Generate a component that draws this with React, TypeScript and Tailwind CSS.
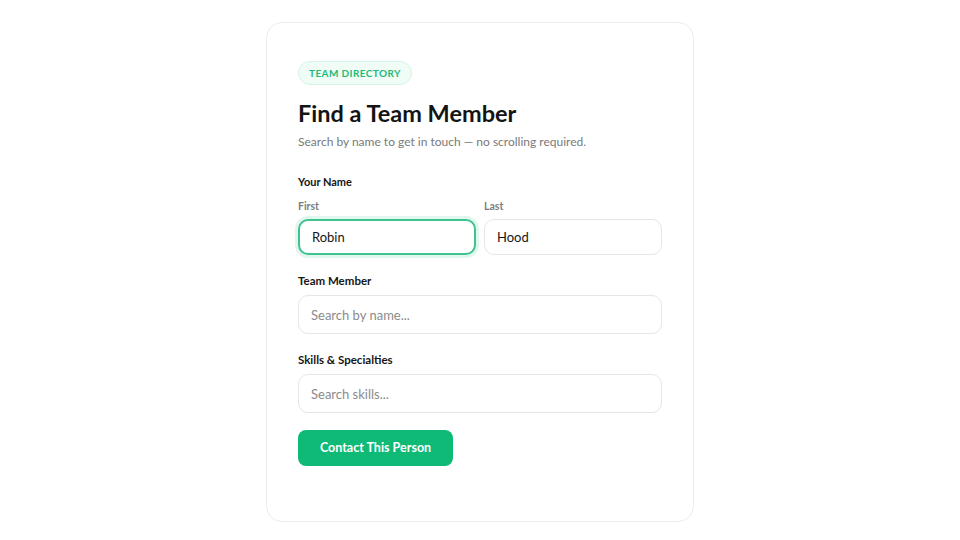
import { useState } from 'react';

const font = { fontFamily: 'Lato, "Noto Sans", sans-serif' };

function TextField({
  value,
  placeholder,
  focused,
  tall,
  onChange,
}: {
  value: string;
  placeholder?: string;
  focused?: boolean;
  tall?: boolean;
  onChange: (v: string) => void;
}) {
  return (
    <input
      value={value}
      placeholder={placeholder}
      onChange={(e) => onChange(e.target.value)}
      className={`w-full rounded-[10px] bg-white px-[12px] text-[13px] text-[#161616] placeholder:text-[#8b8b8b] focus:outline-none ${
        tall ? 'h-[39px]' : 'h-[36px]'
      } ${
        focused
          ? 'border-2 border-[#3cc48c] px-[11px] shadow-[0_0_0_3px_rgba(16,185,129,0.12)]'
          : 'border-[1.5px] border-[#e6e6e6]'
      }`}
    />
  );
}

export default function App() {
  const [first, setFirst] = useState('Robin');
  const [last, setLast] = useState('Hood');
  const [member, setMember] = useState('');
  const [skills, setSkills] = useState('');

  return (
    <div className="flex min-h-[540px] w-full justify-center bg-white pt-[22px]" style={font}>
      <div className="h-fit w-[428px] rounded-[16px] border border-[#ececec] bg-white px-[31px] pb-[55px] pt-[38px]">
        <div className="flex">
          <span className="flex h-6 items-center rounded-full border border-[#d3f5e5] bg-[#f0fcf6] px-[10px] text-[10px] font-bold tracking-[0.04em] text-[#1fb97a]">
            TEAM DIRECTORY
          </span>
        </div>

        <h1 className="mt-[13px] text-[23.5px] font-bold leading-[30px] text-[#141414]">
          Find a Team Member
        </h1>
        <p className="mt-[4px] text-[12px] leading-5 text-[#7a7a7a]">
          Search by name to get in touch — no scrolling required.
        </p>

        <div className="mt-[22px]">
          <p className="text-[11px] font-bold leading-4 text-[#161616]">Your Name</p>
          <div className="mt-[9px] grid grid-cols-2 gap-2">
            <label className="block">
              <span className="block text-[10.5px] font-bold leading-[14px] text-[#7d7d7d]">First</span>
              <div className="mt-[6px]">
                <TextField value={first} onChange={setFirst} focused />
              </div>
            </label>
            <label className="block">
              <span className="block text-[10.5px] font-bold leading-[14px] text-[#7d7d7d]">Last</span>
              <div className="mt-[6px]">
                <TextField value={last} onChange={setLast} />
              </div>
            </label>
          </div>
        </div>

        <label className="mt-[18px] block">
          <span className="block text-[11.5px] font-bold leading-4 text-[#161616]">Team Member</span>
          <div className="mt-[6px]">
            <TextField value={member} onChange={setMember} placeholder="Search by name..." tall />
          </div>
        </label>

        <label className="mt-[18px] block">
          <span className="block text-[11.5px] font-bold leading-4 text-[#161616]">Skills &amp; Specialties</span>
          <div className="mt-[6px]">
            <TextField value={skills} onChange={setSkills} placeholder="Search skills..." tall />
          </div>
        </label>

        <button
          type="button"
          className="mt-[17px] h-[36px] w-[155px] rounded-[8px] bg-[#0fba77] text-[12.5px] font-bold text-white"
        >
          Contact This Person
        </button>
      </div>
    </div>
  );
}
